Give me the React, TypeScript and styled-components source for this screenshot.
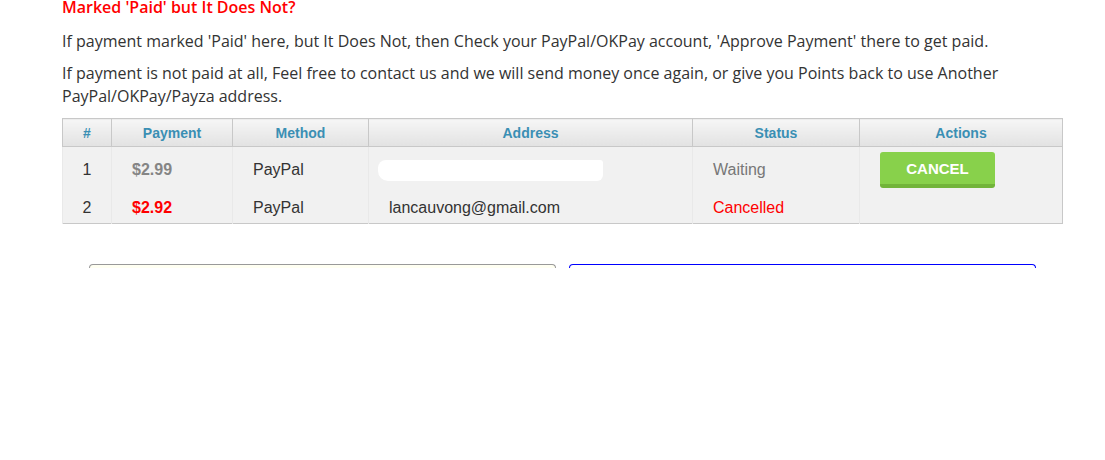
import styled, { createGlobalStyle } from 'styled-components';

const GlobalStyle = createGlobalStyle`
  body {
    margin: 0;
    background: #fff;
    font-family: 'Open Sans', Arial, sans-serif;
  }
`;

const Page = styled.div`
  width: 1000px;
  padding-left: 62px;
`;

const Heading = styled.h3`
  margin: -3px 0 13px;
  font-size: 16px;
  line-height: 20px;
  font-weight: 600;
  color: #ff0000;
`;

const Paragraph = styled.p`
  margin: 0 0 9px;
  font-size: 16px;
  line-height: 23px;
  color: #333;
`;

const Table = styled.table`
  width: 1000px;
  margin-top: 10px;
  border-collapse: collapse;
  border: 1px solid #c8c8c8;
  background: #f1f1f1;
  font-family: 'Liberation Sans', Arial, sans-serif;
  table-layout: fixed;
`;

const Th = styled.th`
  height: 27px;
  padding: 0;
  border: 1px solid #c8c8c8;
  background: linear-gradient(#f6f6f6, #e2e2e2);
  color: #3a8fb4;
  font-size: 14px;
  font-weight: 700;
  text-align: center;
`;

const Td = styled.td<{ $center?: boolean }>`
  padding: 5px 10px 5px ${(p) => (p.$center ? '10px' : '20px')};
  border-left: 1px solid #e9e9e9;
  font-size: 16px;
  line-height: 18px;
  color: #333;
  text-align: ${(p) => (p.$center ? 'center' : 'left')};
  vertical-align: middle;

  tr:last-child > & {
    padding-top: 6px;
    padding-bottom: 6px;
  }
`;

const Amount = styled.span<{ $color: string }>`
  font-weight: 700;
  color: ${(p) => p.$color};
`;

const Status = styled.span<{ $color: string }>`
  color: ${(p) => p.$color};
`;

const Redacted = styled.span`
  display: block;
  width: 225px;
  height: 21px;
  margin-left: -11px;
  background: #fff;
  border-radius: 8px 3px 6px 10px;
`;

const CancelButton = styled.button`
  width: 115px;
  height: 36px;
  border: none;
  border-bottom: 4px solid #72b43a;
  border-radius: 3px;
  background: #88d14b;
  color: #fff;
  font-family: 'Liberation Sans', Arial, sans-serif;
  font-size: 15px;
  font-weight: 700;
  padding: 0;
  cursor: pointer;
`;

const Boxes = styled.div`
  display: flex;
  gap: 13px;
  margin: 40px 0 0 27px;
`;

const Box = styled.div<{ $border: string; $bg: string }>`
  width: 465px;
  height: 3px;
  border: 1px solid ${(p) => p.$border};
  border-bottom: none;
  border-radius: 4px 4px 0 0;
  background: ${(p) => p.$bg};
`;

const rows = [
  { n: 1, amount: '$2.99', amountColor: '#858585', method: 'PayPal', address: null, status: 'Waiting', statusColor: '#777', cancel: true },
  { n: 2, amount: '$2.92', amountColor: '#ff0000', method: 'PayPal', address: 'lancauvong@gmail.com', status: 'Cancelled', statusColor: '#ff0000', cancel: false },
];

export default function App() {
  return (
    <Page>
      <GlobalStyle />
      <Heading>Marked 'Paid' but It Does Not?</Heading>
      <Paragraph>
        If payment marked 'Paid' here, but It Does Not, then Check your PayPal/OKPay account, 'Approve Payment' there to get paid.
      </Paragraph>
      <Paragraph>
        If payment is not paid at all, Feel free to contact us and we will send money once again, or give you Points back to use Another PayPal/OKPay/Payza address.
      </Paragraph>
      <Table>
        <colgroup>
          <col style={{ width: 49 }} />
          <col style={{ width: 121 }} />
          <col style={{ width: 136 }} />
          <col style={{ width: 324 }} />
          <col style={{ width: 167 }} />
          <col style={{ width: 203 }} />
        </colgroup>
        <thead>
          <tr>
            <Th>#</Th>
            <Th>Payment</Th>
            <Th>Method</Th>
            <Th>Address</Th>
            <Th>Status</Th>
            <Th>Actions</Th>
          </tr>
        </thead>
        <tbody>
          {rows.map((r) => (
            <tr key={r.n}>
              <Td $center>{r.n}</Td>
              <Td>
                <Amount $color={r.amountColor}>{r.amount}</Amount>
              </Td>
              <Td>{r.method}</Td>
              <Td>{r.address ?? <Redacted />}</Td>
              <Td>
                <Status $color={r.statusColor}>{r.status}</Status>
              </Td>
              <Td>{r.cancel && <CancelButton>CANCEL</CancelButton>}</Td>
            </tr>
          ))}
        </tbody>
      </Table>
      <Boxes>
        <Box $border="#999" $bg="#fffff2" />
        <Box $border="#0000ff" $bg="#fff" />
      </Boxes>
    </Page>
  );
}
